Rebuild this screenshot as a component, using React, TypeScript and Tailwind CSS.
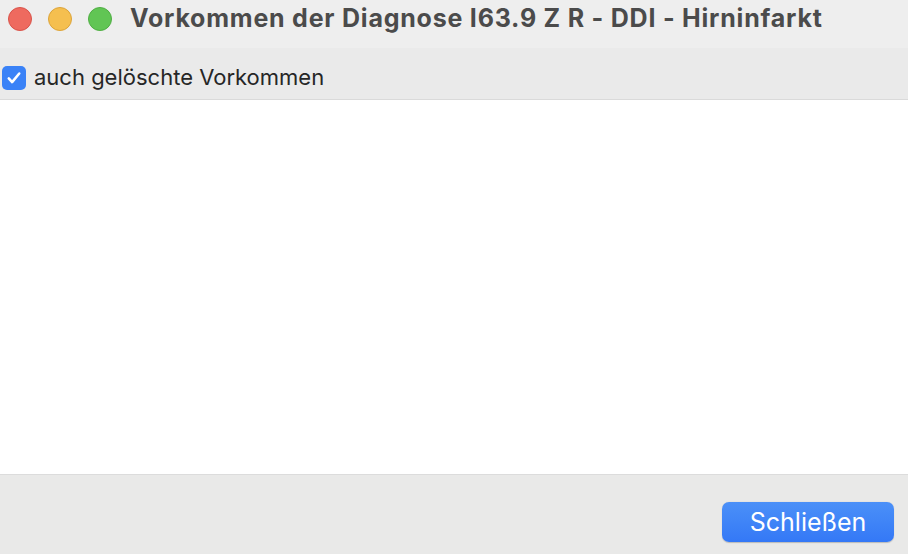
export default function App() {
  return (
    <div className="flex h-[554px] w-[908px] flex-col overflow-hidden bg-[#ececec] font-['Inter','Liberation_Sans',sans-serif]">
      <div className="flex h-[48px] items-start bg-[#eeeeee] pt-[7px]">
        <div className="ml-[8px] flex items-center gap-[16px]">
          <span className="h-[24px] w-[24px] rounded-full border border-[#d9534a] bg-[#ee6a5f]" />
          <span className="h-[24px] w-[24px] rounded-full border border-[#dca43a] bg-[#f5bf4f]" />
          <span className="h-[24px] w-[24px] rounded-full border border-[#4fae43] bg-[#61c554]" />
        </div>
        <h1 className="ml-[18px] mt-[-4px] text-[25px] leading-[30px] font-bold tracking-[0.78px] text-[#4b4b4b]">
          Vorkommen der Diagnose I63.9 Z R - DDI - Hirninfarkt
        </h1>
      </div>
      <div className="flex h-[52px] items-center border-b border-[#dadada] bg-[#eaeaea] pl-[2px] pt-[8px]">
        <span className="flex h-[24px] w-[24px] items-center justify-center rounded-[5px] bg-[#3a82f7]">
          <svg viewBox="0 0 24 24" className="h-[18px] w-[18px]" fill="none" stroke="white" strokeWidth="3.4" strokeLinecap="round" strokeLinejoin="round">
            <path d="M5 12.5l4.5 5L19 6" />
          </svg>
        </span>
        <span className="ml-[8px] text-[22px] text-[#262626]">auch gelöschte Vorkommen</span>
      </div>
      <div className="flex-1 border-b border-[#dcdcdc] bg-white" />
      <div className="flex h-[79px] items-start justify-end bg-[#e9e9e8] pr-[14px] pt-[27px]">
        <button className="h-[40px] w-[172px] rounded-[7px] bg-gradient-to-b from-[#4b90f8] to-[#3478f6] text-[25px] leading-[40px] text-white shadow-[0_0.5px_1px_rgba(0,0,0,0.2)]">
          Schließen
        </button>
      </div>
    </div>
  );
}
